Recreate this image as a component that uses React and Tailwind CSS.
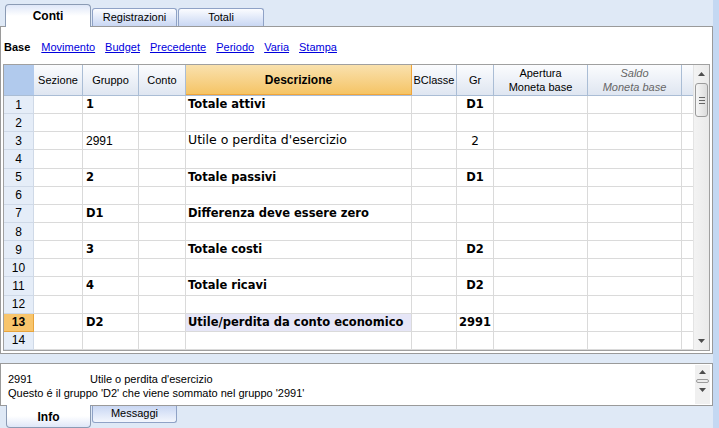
import React from 'react'

const rows = [
  { n: 1, g: '1', d: 'Totale attivi', gr: 'D1', b: true },
  { n: 2 },
  { n: 3, g: '2991', d: "Utile o perdita d'esercizio", gr: '2' },
  { n: 4 },
  { n: 5, g: '2', d: 'Totale passivi', gr: 'D1', b: true },
  { n: 6 },
  { n: 7, g: 'D1', d: 'Differenza deve essere zero', b: true },
  { n: 8 },
  { n: 9, g: '3', d: 'Totale costi', gr: 'D2', b: true },
  { n: 10 },
  { n: 11, g: '4', d: 'Totale ricavi', gr: 'D2', b: true },
  { n: 12 },
  { n: 13, g: 'D2', d: 'Utile/perdita da conto economico', gr: '2991', b: true, sel: true },
  { n: 14 },
]

const links = ['Movimento', 'Budget', 'Precedente', 'Periodo', 'Varia', 'Stampa']

function UpArrow() {
  return (
    <svg width="7" height="4" viewBox="0 0 7 4">
      <path d="M0 4 L3.5 0 L7 4 Z" fill="#4d4d4d" />
    </svg>
  )
}

function DownArrow() {
  return (
    <svg width="7" height="4" viewBox="0 0 7 4">
      <path d="M0 0 L3.5 4 L7 0 Z" fill="#4d4d4d" />
    </svg>
  )
}

function HeaderCell({ w, children, className = '' }) {
  return (
    <div
      className={`${w} h-full shrink-0 flex flex-col items-center justify-center border-r border-[#aabdd5] bg-gradient-to-b from-[#fbfcfe] to-[#dfe6f1] leading-[14px] ${className}`}
    >
      {children}
    </div>
  )
}

// celle del corpo in DejaVu Sans, piu' vicina al Tahoma dell'originale
const cellFont = { fontFamily: '"DejaVu Sans", Verdana, sans-serif' }

function Row({ r }) {
  const bold = r.b ? 'font-bold text-[11.5px]' : 'text-[12.5px]'
  return (
    <div className="flex h-[18.15px] shrink-0 text-[12px]">
      <div
        className={`w-[30px] shrink-0 flex items-center justify-center border-r border-b ${
          r.sel ? 'bg-[#f8c56c] border-[#e8a43c] font-bold' : 'bg-[#e5edf8] border-[#cfd9e7]'
        }`}
      >
        {r.n}
      </div>
      <div className="w-[49px] shrink-0 border-r border-b border-[#dadada]" />
      <div
        className={`w-[56px] shrink-0 border-r border-b border-[#dadada] flex items-center pl-[3px] ${
          r.b ? 'font-bold text-[11.5px]' : ''
        }`}
        style={r.b ? cellFont : undefined}
      >
        {r.g}
      </div>
      <div className="w-[47px] shrink-0 border-r border-b border-[#dadada]" />
      <div
        className={`w-[226px] shrink-0 border-r border-b border-[#dadada] flex items-center pl-[2px] whitespace-nowrap ${bold} ${
          r.sel ? 'bg-[#e6e6f7]' : ''
        }`}
        style={cellFont}
      >
        {r.d}
      </div>
      <div className="w-[45px] shrink-0 border-r border-b border-[#dadada]" />
      <div
        className="w-[37px] shrink-0 border-r border-b border-[#dadada] flex items-center justify-center font-bold text-[11.5px]"
        style={cellFont}
      >
        {r.gr === '2' ? <span className="font-normal text-[12px]">{r.gr}</span> : r.gr}
      </div>
      <div className="w-[94px] shrink-0 border-r border-b border-[#dadada]" />
      <div className="w-[94px] shrink-0 border-r border-b border-[#dadada]" />
      <div className="w-[11px] shrink-0 border-b border-[#dadada]" />
    </div>
  )
}

export default function App() {
  return (
    <div
      className="w-[719px] h-[428px] overflow-hidden flex bg-[#dfe9f6] text-black"
      style={{ fontFamily: '"Liberation Sans", Arial, sans-serif' }}
    >
      <div className="w-[713px] shrink-0 flex flex-col">
        {/* tab in alto */}
        <div className="h-[26px] flex items-end pl-[5px] gap-[1px] relative z-10">
          <div className="w-[86px] h-[23px] -mb-px rounded-t-[4px] border border-b-0 border-[#8b9bb4] bg-gradient-to-b from-[#dfe7f8] via-white to-white flex items-center justify-center text-[12px] font-bold">
            Conti
          </div>
          <div className="w-[85px] h-[18px] rounded-t-[3px] border border-b-0 border-[#8fa2c6] bg-gradient-to-b from-[#fbfcff] to-[#c9d7f3] flex items-center justify-center text-[11px]">
            Registrazioni
          </div>
          <div className="w-[86px] h-[18px] rounded-t-[3px] border border-b-0 border-[#8fa2c6] bg-gradient-to-b from-[#fbfcff] to-[#c9d7f3] flex items-center justify-center text-[11px]">
            Totali
          </div>
        </div>

        {/* pannello principale */}
        <div className="h-[328px] shrink-0 bg-white border border-[#9a9a9a] flex flex-col pl-[2px] pr-[2px]">
          <div className="h-[37px] shrink-0 flex items-center gap-[10px] text-[11px] pt-[3px] pl-px">
            <span className="font-bold mr-px">Base</span>
            {links.map((l) => (
              <span key={l} className="text-[#0000dd] underline">
                {l}
              </span>
            ))}
          </div>
          <div className="h-[287px] shrink-0 border border-[#a0a0a0] flex overflow-hidden">
            <div className="flex-1 flex flex-col overflow-hidden">
              <div className="h-[31px] shrink-0 flex border-b border-[#aabdd5] text-[11px]">
                <div className="w-[30px] h-full shrink-0 bg-[#b1caed]" />
                <HeaderCell w="w-[49px]">Sezione</HeaderCell>
                <HeaderCell w="w-[56px]">Gruppo</HeaderCell>
                <HeaderCell w="w-[47px]">Conto</HeaderCell>
                <div className="w-[226px] h-full shrink-0 flex items-center justify-center border-r border-b border-[#f0a53a] bg-gradient-to-b from-[#f9e1ad] to-[#f5c464] text-[12px] font-bold">
                  Descrizione
                </div>
                <HeaderCell w="w-[45px]">BClasse</HeaderCell>
                <HeaderCell w="w-[37px]">Gr</HeaderCell>
                <HeaderCell w="w-[94px]">
                  <span>Apertura</span>
                  <span>Moneta base</span>
                </HeaderCell>
                <HeaderCell w="w-[94px]" className="italic text-[#666]">
                  <span>Saldo</span>
                  <span>Moneta base</span>
                </HeaderCell>
                <div className="w-[11px] h-full shrink-0 bg-gradient-to-b from-[#fbfcfe] to-[#dfe6f1]" />
              </div>
              {rows.map((r) => (
                <Row key={r.n} r={r} />
              ))}
            </div>
            {/* barra di scorrimento */}
            <div className="w-[16px] shrink-0 bg-gradient-to-r from-[#f3f3f3] to-[#eaeaea] border-l border-[#e4e4e4] flex flex-col items-center">
              <div className="h-[16px] flex items-center justify-center mt-px">
                <UpArrow />
              </div>
              <div className="w-[13px] h-[34px] mt-[1px] rounded-[3px] border border-[#9b9b9b] bg-gradient-to-r from-[#f6f6f6] to-[#dcdcdc] flex flex-col items-center justify-center gap-[2px]">
                <div className="w-[6px] h-px bg-[#666]" />
                <div className="w-[6px] h-px bg-[#666]" />
                <div className="w-[6px] h-px bg-[#666]" />
              </div>
              <div className="flex-1" />
              <div className="h-[16px] flex items-center justify-center mb-[1px]">
                <DownArrow />
              </div>
            </div>
          </div>
        </div>

        {/* pannello info */}
        <div className="h-[43px] shrink-0 mt-[9px] bg-white border border-[#9a9a9a] flex text-[11px] relative z-0">
          <div className="flex-1 flex flex-col pl-[7px] pt-[8px] leading-[14px]">
            <div className="flex">
              <span className="w-[82px]">2991</span>
              <span>Utile o perdita d'esercizio</span>
            </div>
            <div>Questo é il gruppo 'D2' che viene sommato nel gruppo '2991'</div>
          </div>
          <div className="w-[15px] shrink-0 mr-[2px] my-[1px] bg-[#f0f0f0] flex flex-col items-center">
            <div className="h-[14px] flex items-center justify-center">
              <UpArrow />
            </div>
            <div className="w-[13px] h-[4px] rounded-[2px] border border-[#9b9b9b] bg-[#ececec]" />
            <div className="h-[14px] flex items-center justify-center">
              <DownArrow />
            </div>
          </div>
        </div>

        {/* tab in basso */}
        <div className="flex items-start pl-[6px] gap-[1px] relative z-10">
          <div className="w-[85px] h-[23px] -mt-px rounded-b-[4px] border border-t-0 border-[#8b9bb4] bg-gradient-to-b from-white via-white to-[#dfe7f8] flex items-center justify-center text-[12px] font-bold pt-[2px]">
            Info
          </div>
          <div className="w-[85px] h-[17px] rounded-b-[3px] border border-t-0 border-[#8fa2c6] bg-gradient-to-b from-[#c9d7f3] to-[#f3f6fd] flex items-center justify-center text-[11px] pb-[2px]">
            Messaggi
          </div>
        </div>
      </div>
      <div className="w-[6px] shrink-0 bg-[#c4d8f2]" />
    </div>
  )
}
